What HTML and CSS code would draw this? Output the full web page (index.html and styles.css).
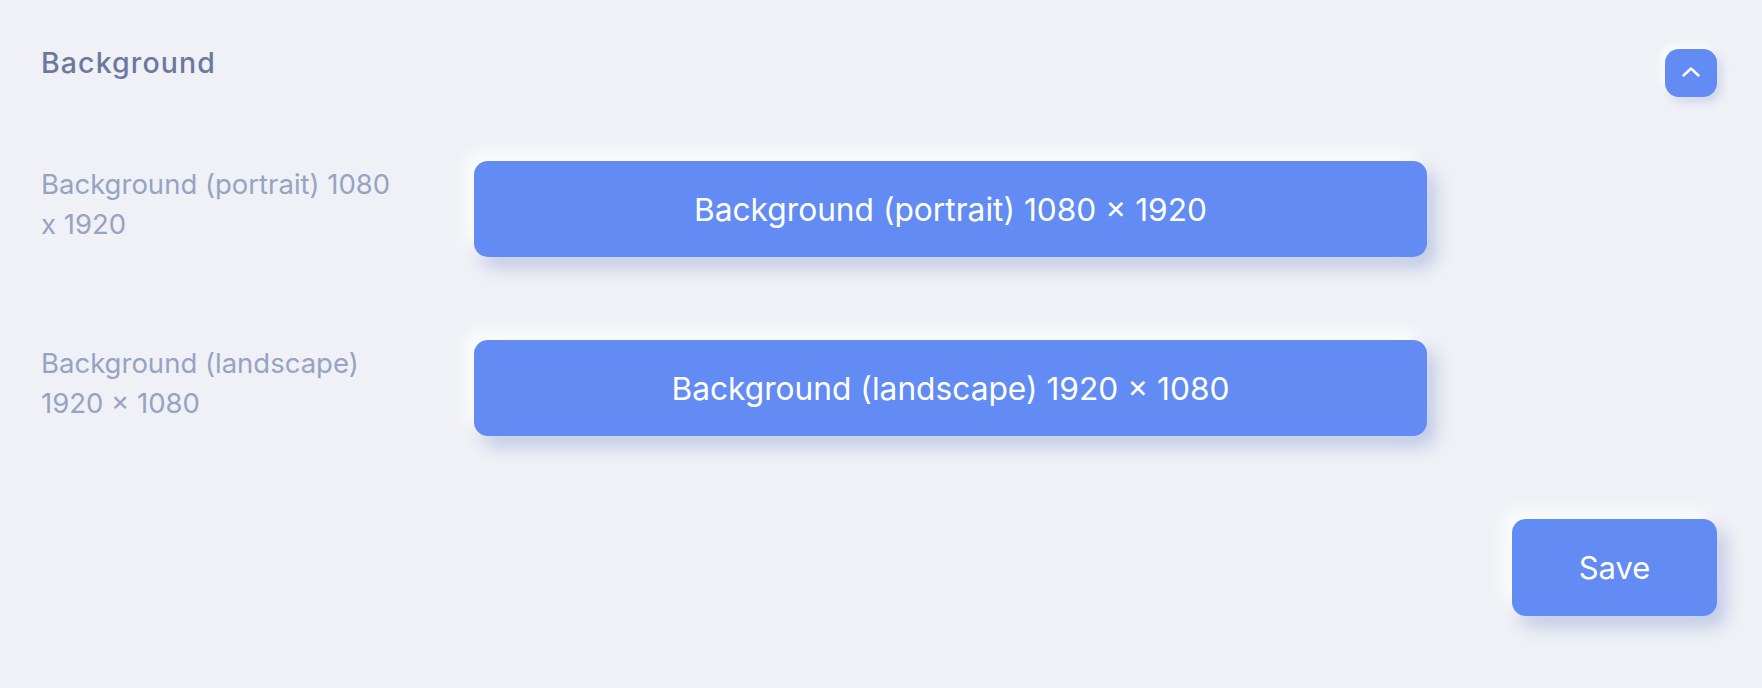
FILE: index.html
```html
<!DOCTYPE html>
<html lang="en">
<head>
<meta charset="utf-8">
<title>Background</title>
<link rel="stylesheet" href="styles.css">
</head>
<body>
<div class="panel">
  <div class="header">
    <h2 class="title">Background</h2>
    <button class="toggle" type="button" aria-label="Collapse">
      <svg width="20" height="12" viewBox="0 0 20 12" fill="none" stroke="#ffffff" stroke-width="2.4" stroke-linecap="round" stroke-linejoin="round"><path d="M2.5 9.5 L10 2.5 L17.5 9.5"/></svg>
    </button>
  </div>
  <div class="rows">
    <div class="row">
      <div class="label">Background (portrait) 1080 x 1920</div>
      <button class="btn wide" type="button">Background (portrait) 1080 × 1920</button>
    </div>
    <div class="row">
      <div class="label">Background (landscape) 1920 × 1080</div>
      <button class="btn wide" type="button">Background (landscape) 1920 × 1080</button>
    </div>
    <div class="actions">
      <button class="btn save" type="button">Save</button>
    </div>
  </div>
</div>
</body>
</html>
```
FILE: styles.css
```css
html, body {
  margin: 0;
  padding: 0;
  background: #eff1f6;
}
body {
  font-family: Inter, "Noto Sans", "Liberation Sans", sans-serif;
  width: 1762px;
  height: 688px;
  overflow: hidden;
}
.panel {
  padding: 44px 45px 0 41px;
}
.header {
  display: flex;
  justify-content: space-between;
  align-items: flex-start;
}
.title {
  margin: 0;
  font-size: 28.5px;
  line-height: 38px;
  font-weight: 500;
  letter-spacing: 1.1px;
  color: #6b79a0;
}
.toggle {
  margin-top: 5px;
  width: 52px;
  height: 48px;
  border: 0;
  border-radius: 14px;
  background: #628cf3;
  display: flex;
  align-items: center;
  justify-content: center;
  padding: 0;
  box-shadow: -4px -4px 10px rgba(255,255,255,0.9), 4px 5px 10px rgba(90,110,190,0.22);
}
.toggle svg { display: block; margin-top: -2px; }
.rows {
  margin-top: 64px;
  display: flex;
  flex-direction: column;
  gap: 83px;
}
.row {
  display: flex;
  align-items: flex-start;
}
.label {
  width: 370px;
  margin-right: 63px;
  padding-top: 3px;
  font-size: 27.5px;
  line-height: 40px;
  color: #97a3c3;
}
.btn {
  border: 0;
  background: #628cf3;
  color: #ffffff;
  font-family: Inter, "Noto Sans", "Liberation Sans", sans-serif;
  font-size: 31.7px;
  border-radius: 14px;
  height: 96px;
  box-shadow: -8px -8px 18px rgba(255,255,255,0.95), 8px 10px 18px rgba(80,105,190,0.32);
}
.wide {
  width: 953px;
}
.actions {
  display: flex;
  justify-content: flex-end;
}
.save {
  width: 205px;
  height: 97px;
  font-size: 31px;
}
```
